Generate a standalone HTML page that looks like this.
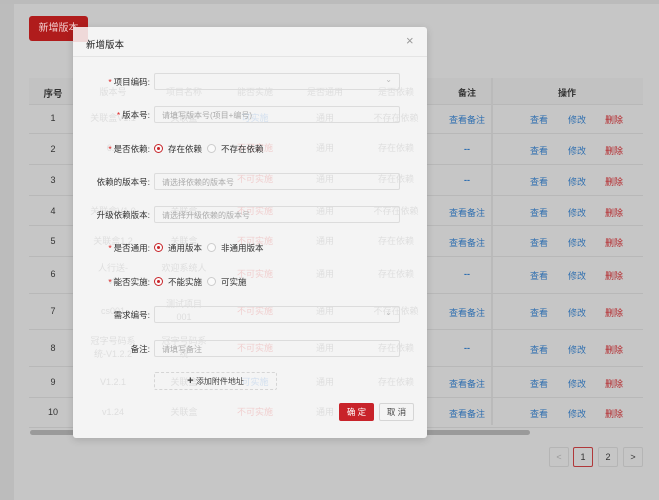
<!DOCTYPE html>
<html><head><meta charset="utf-8"><style>
*{margin:0;padding:0;box-sizing:border-box}
body{width:659px;height:500px;overflow:hidden;background:#c6c6c6;font-family:"Liberation Sans","Noto Sans CJK SC",sans-serif;font-size:9px;color:#333;position:relative}
.a{position:absolute}
.c{position:absolute;transform:translateX(-50%);white-space:nowrap}
.blue{color:#2f6fb0}.red{color:#b4262a}
.g{position:absolute;transform:translateX(-50%);white-space:nowrap;color:#dedede;font-size:9px;text-align:center;line-height:13px}
.gr{color:#f0cfcf}.gb{color:#d3e0ef}
.hl{position:absolute;left:29px;width:614px;height:1px;background:#b8b8b8}
.lbl{position:absolute;right:509px;white-space:nowrap;color:#333;font-size:8.5px}
.lbl b{color:#e02020;font-weight:normal;margin-right:2px}
.inp{position:absolute;left:154px;width:246px;height:17px;border:1px solid #dcdcdc;border-radius:2px;color:#aaa;font-size:8px;padding:3px 7px}
.rad{position:absolute;width:9px;height:9px;border-radius:50%;border:1px solid #ccc;background:#fafafa}
.rad.on{border-color:#c8252a}
.rad.on:after{content:"";position:absolute;left:2px;top:2px;width:3px;height:3px;border-radius:50%;background:#c8252a}
.pg{position:absolute;top:447px;width:20px;height:20px;border:1px solid #b5b5b5;border-radius:2px;text-align:center;line-height:18px;font-size:9px;color:#333}
</style></head><body>
<div class="a" style="left:0;top:0;width:14px;height:500px;background:#bcbcbc"></div>
<div class="a" style="left:0;top:0;width:659px;height:4px;background:#bbb"></div>
<div class="a" style="left:29px;top:16px;width:59px;height:25px;background:#b01c1c;border-radius:3px;color:#f3d0d0;font-size:10px;line-height:25px;text-align:center">新增版本</div>
<!-- table -->
<div class="a" style="left:29px;top:78px;width:614px;height:26px;background:#c2c2c2"></div>
<div class="hl" style="top:104px"></div>
<div class="a" style="left:491px;top:78px;width:2px;height:347px;background:#bababa"></div>
<div class="c" style="left:53px;top:86px;font-weight:bold;font-size:9.5px">序号</div>
<div class="c" style="left:467px;top:86px;font-weight:bold">备注</div>
<div class="c" style="left:567px;top:86px;font-weight:bold">操作</div>

<div class="c" style="left:53px;top:113px">1</div><div class="c blue" style="left:467px;top:113px">查看备注</div>
<div class="hl" style="top:133px"></div>
<div class="c" style="left:53px;top:144px">2</div><div class="c blue" style="left:467px;top:144px;font-weight:bold">--</div>
<div class="hl" style="top:164px"></div>
<div class="c" style="left:53px;top:175px">3</div><div class="c blue" style="left:467px;top:175px;font-weight:bold">--</div>
<div class="hl" style="top:195px"></div>
<div class="c" style="left:53px;top:206px">4</div><div class="c blue" style="left:467px;top:206px">查看备注</div>
<div class="hl" style="top:225px"></div>
<div class="c" style="left:53px;top:236px">5</div><div class="c blue" style="left:467px;top:236px">查看备注</div>
<div class="hl" style="top:256px"></div>
<div class="c" style="left:53px;top:269px">6</div><div class="c blue" style="left:467px;top:269px;font-weight:bold">--</div>
<div class="hl" style="top:293px"></div>
<div class="c" style="left:53px;top:306px">7</div><div class="c blue" style="left:467px;top:306px">查看备注</div>
<div class="hl" style="top:329px"></div>
<div class="c" style="left:53px;top:343px">8</div><div class="c blue" style="left:467px;top:343px;font-weight:bold">--</div>
<div class="hl" style="top:366px"></div>
<div class="c" style="left:53px;top:377px">9</div><div class="c blue" style="left:467px;top:377px">查看备注</div>
<div class="hl" style="top:397px"></div>
<div class="c" style="left:53px;top:407px">10</div><div class="c blue" style="left:467px;top:407px">查看备注</div>
<div class="hl" style="top:427px"></div>

<div class="c blue" style="left:539px;top:113px">查看</div><div class="c blue" style="left:577px;top:113px">修改</div><div class="c red" style="left:614px;top:113px">删除</div>
<div class="c blue" style="left:539px;top:144px">查看</div><div class="c blue" style="left:577px;top:144px">修改</div><div class="c red" style="left:614px;top:144px">删除</div>
<div class="c blue" style="left:539px;top:175px">查看</div><div class="c blue" style="left:577px;top:175px">修改</div><div class="c red" style="left:614px;top:175px">删除</div>
<div class="c blue" style="left:539px;top:206px">查看</div><div class="c blue" style="left:577px;top:206px">修改</div><div class="c red" style="left:614px;top:206px">删除</div>
<div class="c blue" style="left:539px;top:236px">查看</div><div class="c blue" style="left:577px;top:236px">修改</div><div class="c red" style="left:614px;top:236px">删除</div>
<div class="c blue" style="left:539px;top:269px">查看</div><div class="c blue" style="left:577px;top:269px">修改</div><div class="c red" style="left:614px;top:269px">删除</div>
<div class="c blue" style="left:539px;top:306px">查看</div><div class="c blue" style="left:577px;top:306px">修改</div><div class="c red" style="left:614px;top:306px">删除</div>
<div class="c blue" style="left:539px;top:343px">查看</div><div class="c blue" style="left:577px;top:343px">修改</div><div class="c red" style="left:614px;top:343px">删除</div>
<div class="c blue" style="left:539px;top:377px">查看</div><div class="c blue" style="left:577px;top:377px">修改</div><div class="c red" style="left:614px;top:377px">删除</div>
<div class="c blue" style="left:539px;top:407px">查看</div><div class="c blue" style="left:577px;top:407px">修改</div><div class="c red" style="left:614px;top:407px">删除</div>

<div class="a" style="left:30px;top:430px;width:500px;height:5px;border-radius:3px;background:#9a9a9a"></div>
<div class="pg" style="left:549px;color:#999">&lt;</div>
<div class="pg" style="left:573px;border-color:#b0383a">1</div>
<div class="pg" style="left:598px">2</div>
<div class="pg" style="left:623px">&gt;</div>

<!-- modal -->
<div class="a" style="left:73px;top:27px;width:354px;height:411px;background:#f4f4f4;border-radius:3px;box-shadow:0 2px 8px rgba(0,0,0,.15)">
<div class="a" style="left:13px;top:10px;font-size:9.5px;color:#222">新增版本</div>
<div class="a" style="left:333px;top:6px;font-size:13px;color:#999">×</div>
<div class="a" style="left:0;top:29px;width:354px;height:1px;background:#e4e4e4"></div>
</div>
<div class="a" style="left:73px;top:27px;width:15px;height:15px;background:#efd9d9"></div>
<!-- ghost table text -->
<div class="g" style="left:113px;top:86px">版本号</div><div class="g" style="left:184px;top:86px">项目名称</div><div class="g" style="left:255px;top:86px">能否实施</div><div class="g" style="left:325px;top:86px">是否通用</div><div class="g" style="left:396px;top:86px">是否依赖</div>
<div class="g" style="left:113px;top:112px">关联盒V1.1</div><div class="g" style="left:184px;top:112px">关联盒</div><div class="g gb" style="left:255px;top:112px">可实施</div><div class="g" style="left:325px;top:112px">通用</div><div class="g" style="left:396px;top:112px">不存在依赖</div>
<div class="g" style="left:113px;top:142px">6.1</div><div class="g gr" style="left:255px;top:142px">不可实施</div><div class="g" style="left:325px;top:142px">通用</div><div class="g" style="left:396px;top:142px">存在依赖</div>
<div class="g gr" style="left:255px;top:173px">不可实施</div><div class="g" style="left:325px;top:173px">通用</div><div class="g" style="left:396px;top:173px">存在依赖</div>
<div class="g" style="left:113px;top:205px">关联盒V1.0</div><div class="g" style="left:184px;top:205px">关联盒</div><div class="g gr" style="left:255px;top:205px">不可实施</div><div class="g" style="left:325px;top:205px">通用</div><div class="g" style="left:396px;top:205px">不存在依赖</div>
<div class="g" style="left:113px;top:235px">关联盒1.2</div><div class="g" style="left:184px;top:235px">关联盒</div><div class="g gr" style="left:255px;top:235px">不可实施</div><div class="g" style="left:325px;top:235px">通用</div><div class="g" style="left:396px;top:235px">存在依赖</div>
<div class="g" style="left:113px;top:262px">人行送-<br>v8</div><div class="g" style="left:184px;top:262px">欢迎系统人<br>&nbsp;</div><div class="g gr" style="left:255px;top:268px">不可实施</div><div class="g" style="left:325px;top:268px">通用</div><div class="g" style="left:396px;top:268px">存在依赖</div>
<div class="g" style="left:113px;top:305px">cs001</div><div class="g" style="left:184px;top:298px">测试项目<br>001</div><div class="g gr" style="left:255px;top:305px">不可实施</div><div class="g" style="left:325px;top:305px">通用</div><div class="g" style="left:396px;top:305px">不存在依赖</div>
<div class="g" style="left:113px;top:335px">冠字号码系<br>统-V1.2.2</div><div class="g" style="left:184px;top:335px">冠字号码系<br>统</div><div class="g gr" style="left:255px;top:342px">不可实施</div><div class="g" style="left:325px;top:342px">通用</div><div class="g" style="left:396px;top:342px">存在依赖</div>
<div class="g" style="left:113px;top:376px">V1.2.1</div><div class="g" style="left:184px;top:376px">关联盒</div><div class="g gb" style="left:255px;top:376px">可实施</div><div class="g" style="left:325px;top:376px">通用</div><div class="g" style="left:396px;top:376px">存在依赖</div>
<div class="g" style="left:113px;top:406px">v1.24</div><div class="g" style="left:184px;top:406px">关联盒</div><div class="g gr" style="left:255px;top:406px">不可实施</div><div class="g" style="left:325px;top:406px">通用</div>

<div class="a" style="left:0;top:0;width:659px;height:500px">
<div class="lbl" style="top:76px"><b>*</b>项目编码:</div>
<div class="inp" style="top:73px"><span style="position:absolute;right:7px;top:1px;color:#bbb">⌄</span></div>
<div class="lbl" style="top:109px"><b>*</b>版本号:</div>
<div class="inp" style="top:106px">请填写版本号(项目+编号)</div>
<div class="lbl" style="top:143px"><b>*</b>是否依赖:</div>
<div class="rad on" style="left:154px;top:144px"></div><div class="a" style="left:168px;top:143px;font-size:8.5px">存在依赖</div>
<div class="rad" style="left:207px;top:144px"></div><div class="a" style="left:221px;top:143px;font-size:8.5px">不存在依赖</div>
<div class="lbl" style="top:176px">依赖的版本号:</div>
<div class="inp" style="top:173px">请选择依赖的版本号</div>
<div class="lbl" style="top:209px">升级依赖版本:</div>
<div class="inp" style="top:206px">请选择升级依赖的版本号</div>
<div class="lbl" style="top:242px"><b>*</b>是否通用:</div>
<div class="rad on" style="left:154px;top:243px"></div><div class="a" style="left:168px;top:242px;font-size:8.5px">通用版本</div>
<div class="rad" style="left:207px;top:243px"></div><div class="a" style="left:221px;top:242px;font-size:8.5px">非通用版本</div>
<div class="lbl" style="top:276px"><b>*</b>能否实施:</div>
<div class="rad on" style="left:154px;top:277px"></div><div class="a" style="left:168px;top:276px;font-size:8.5px">不能实施</div>
<div class="rad" style="left:207px;top:277px"></div><div class="a" style="left:221px;top:276px;font-size:8.5px">可实施</div>
<div class="lbl" style="top:309px">需求编号:</div>
<div class="inp" style="top:306px"><span style="position:absolute;right:7px;top:1px;color:#bbb">⌄</span></div>
<div class="lbl" style="top:343px">备注:</div>
<div class="inp" style="top:340px">请填写备注</div>
<div class="a" style="left:154px;top:372px;width:123px;height:18px;border:1px dashed #d5d5d5;border-radius:2px;font-size:8px;color:#444;text-align:center;line-height:16px"><b style="font-size:11px">+</b> 添加附件地址</div>
<div class="a" style="left:339px;top:403px;width:35px;height:18px;background:#c8232a;border-radius:2px;color:#fff;font-size:8.5px;text-align:center;line-height:18px">确 定</div>
<div class="a" style="left:379px;top:403px;width:35px;height:18px;border:1px solid #d5d5d5;border-radius:2px;color:#444;font-size:8.5px;text-align:center;line-height:16px">取 消</div>
</div>
</body></html>
